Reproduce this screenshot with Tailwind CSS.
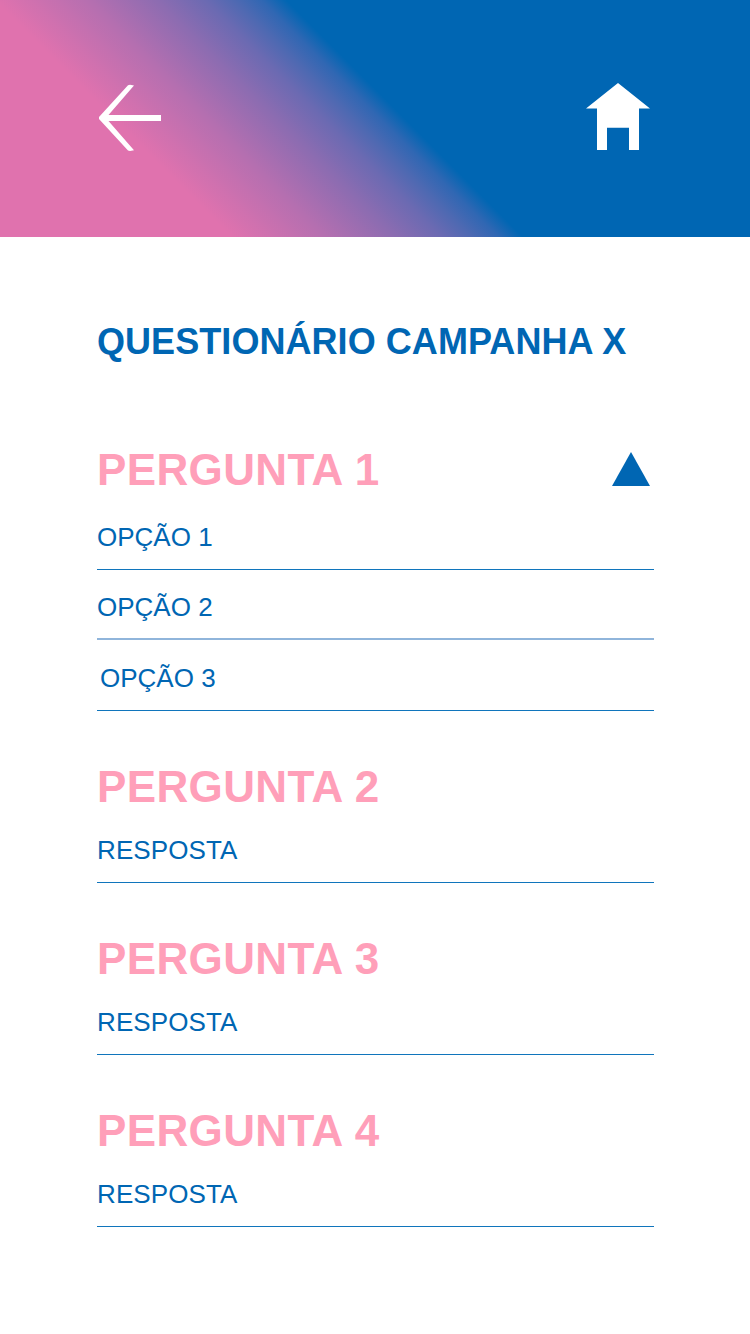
<!DOCTYPE html>
<html lang="pt-BR">
<head>
<meta charset="utf-8">
<title>Questionário Campanha X</title>
<script src="https://cdn.jsdelivr.net/npm/@tailwindcss/browser@4"></script>
</head>
<body class="w-[750px] h-[1334px] overflow-hidden bg-white text-[#0066b3] font-['Liberation_Sans',Arial,sans-serif]">
<header class="h-[237px] flex justify-between items-start pl-[98px] pr-[100px] pt-[83px] bg-[linear-gradient(45deg,#e072ae_0%,#e072ae_23.5%,#b56fb0_33%,#8c6cb1_40%,#6b6ab2_44.8%,#4e69b2_47.8%,#3067b3_50.5%,#0066b3_53%)]">
<svg class="w-[64px] h-[70px]" viewBox="98 83 64 70" fill="#fff" aria-label="Voltar"><path d="M128 85.200l2-.4 4 .8L108.500 115H161V121H108.500L134 150.200l-4 .8-2-.4L99 119V117z"/></svg>
<svg class="w-[64px] h-[67px]" viewBox="586 83 64 67" fill="#fff" aria-label="Início"><path d="M618 83L650 108.600H639V150H629V127.700H607V150H597V108.600H586z"/></svg>
</header>
<main class="pl-[97px] pr-[96px] pt-[85px]">
<h1 class="h-[40px] leading-[40px] text-[36px] tracking-[0.06px] font-bold whitespace-nowrap">QUESTIONÁRIO CAMPANHA X</h1>
<section class="pt-[83px]">
<div class="flex justify-between items-start pr-[4px] h-[50px]">
<h2 class="leading-[50px] text-[44px] tracking-[0.38px] font-bold text-[#ff9fb9] whitespace-nowrap">PERGUNTA 1</h2>
<svg class="mt-[7px] w-[38px] h-[34px]" viewBox="0 0 38 34" fill="#0066b3"><path d="M19 0L38 34H0z"/></svg>
</div>
<p class="h-[75px] pt-[27px] leading-[30px] text-[26px] border-b border-[#1075bc]">OPÇÃO 1</p>
<p class="h-[70px] pt-[22px] leading-[30px] text-[26px] border-b-2 border-[#90b5db]">OPÇÃO 2</p>
<p class="h-[71px] pt-[23px] pl-[3px] leading-[30px] text-[26px] border-b border-[#1075bc]">OPÇÃO 3</p>
</section>
<section class="pt-[51px]">
<h2 class="h-[50px] leading-[50px] text-[44px] tracking-[0.38px] font-bold text-[#ff9fb9]">PERGUNTA 2</h2>
<p class="h-[71px] pt-[23px] leading-[30px] text-[26px] tracking-[0.1px] border-b border-[#1075bc]">RESPOSTA</p>
</section>
<section class="pt-[51px]">
<h2 class="h-[50px] leading-[50px] text-[44px] tracking-[0.38px] font-bold text-[#ff9fb9]">PERGUNTA 3</h2>
<p class="h-[71px] pt-[23px] leading-[30px] text-[26px] tracking-[0.1px] border-b border-[#1075bc]">RESPOSTA</p>
</section>
<section class="pt-[51px]">
<h2 class="h-[50px] leading-[50px] text-[44px] tracking-[0.38px] font-bold text-[#ff9fb9]">PERGUNTA 4</h2>
<p class="h-[71px] pt-[23px] leading-[30px] text-[26px] tracking-[0.1px] border-b border-[#1075bc]">RESPOSTA</p>
</section>
</main>
</body>
</html>
